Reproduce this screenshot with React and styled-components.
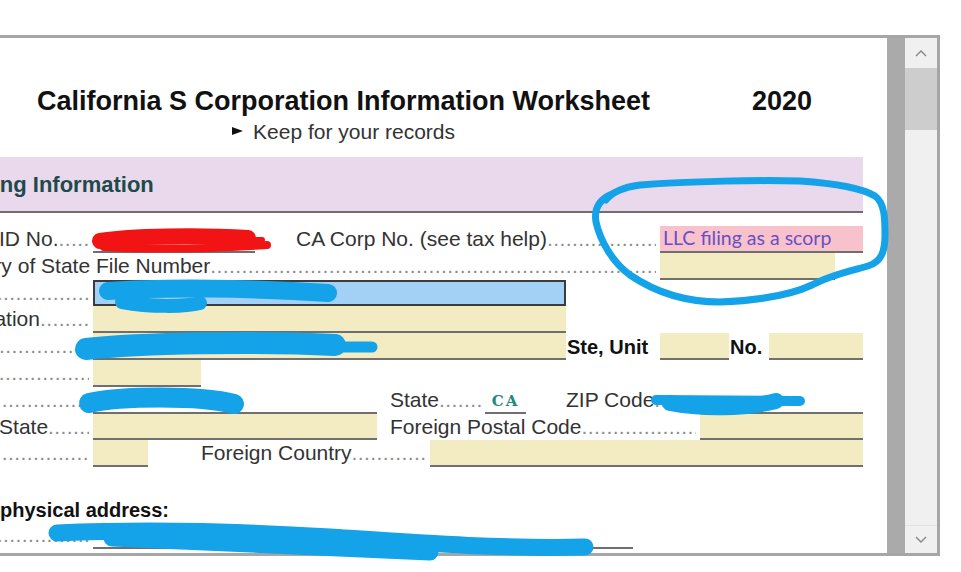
import React from "react";
import styled, { createGlobalStyle, css } from "styled-components";

const GlobalStyle = createGlobalStyle`
  html, body {
    margin: 0;
    padding: 0;
    background: #ffffff;
  }
  body {
    font-family: "Liberation Sans", Arial, sans-serif;
  }
`;

const DOTS = ".".repeat(180);

const tones = {
  plain: "#ffffff",
  beige: "#f3ebc2",
  pink: "#f8c2cc",
  focus: "#a3d1f6",
};

export default function App() {
  return (
    <Screen>
      <GlobalStyle />
      <Frame>
        <Viewport>
          <Sheet>
            <TitleRow>
              <TitleBlock>
                <Title>California S Corporation Information Worksheet</Title>
                <Subtitle>
                  <Pointer />
                  Keep for your records
                </Subtitle>
              </TitleBlock>
              <Year>2020</Year>
            </TitleRow>

            <Band>Filing Information</Band>

            <Rows>
              <Row>
                <Label $w={183} $pad={12}>
                  <span>Federal ID No.</span>
                  <Dots />
                </Label>
                <Field $w={162} $tone="plain" />
                <Spacer $w={41} />
                <Label $w={364}>
                  <span>CA Corp No. (see tax help)</span>
                  <Dots />
                </Label>
                <Field $w={203} $tone="pink">
                  <FieldText>LLC filing as a scorp</FieldText>
                </Field>
              </Row>

              <Row>
                <Label $w={750} $pad={12}>
                  <span>Secretary of State File Number</span>
                  <Dots />
                </Label>
                <Field $w={175} />
              </Row>

              <Row>
                <Label $w={183} $pad={12}>
                  <span>Name</span>
                  <Dots />
                </Label>
                <Field $w={473} $tone="focus" />
              </Row>

              <Row>
                <Label $w={183} $pad={12}>
                  <span>Continuation</span>
                  <Dots />
                </Label>
                <Field $w={473} />
              </Row>

              <Row>
                <Label $w={183} $pad={12}>
                  <span>Address</span>
                  <Dots />
                </Label>
                <Field $w={473} />
                <BoldLabel $w={94}>Ste, Unit</BoldLabel>
                <Field $w={69} />
                <BoldLabel $w={40}>No.</BoldLabel>
                <Field $w={94} />
              </Row>

              <Row>
                <Label $w={183} $pad={12}>
                  <span>PMB</span>
                  <Dots />
                </Label>
                <Field $w={108} />
              </Row>

              <Row>
                <Label $w={183} $pad={12}>
                  <span>City</span>
                  <Dots />
                </Label>
                <Field $w={284} $tone="plain" />
                <Spacer $w={13} />
                <Label $w={95}>
                  <span>State</span>
                  <Dots />
                </Label>
                <Field $w={41} $tone="plain">
                  <StateCode>CA</StateCode>
                </Field>
                <Spacer $w={40} />
                <Label $w={134}>
                  <span>ZIP Code</span>
                  <Dots />
                </Label>
                <Field $w={163} $tone="plain" />
              </Row>

              <Row>
                <Label $w={183} $pad={12}>
                  <span>Foreign State</span>
                  <Dots />
                </Label>
                <Field $w={284} />
                <Spacer $w={13} />
                <Label $w={310}>
                  <span>Foreign Postal Code</span>
                  <Dots />
                </Label>
                <Field $w={163} />
              </Row>

              <Row>
                <Label $w={183} $pad={12}>
                  <span>Country</span>
                  <Dots />
                </Label>
                <Field $w={55} />
                <Spacer $w={53} />
                <Label $w={229}>
                  <span>Foreign Country</span>
                  <Dots />
                </Label>
                <Field $w={433} />
              </Row>
            </Rows>

            <SubHeading>Principal physical address:</SubHeading>

            <Row>
              <Label $w={183} $pad={12}>
                <span>Street</span>
                <Dots />
              </Label>
              <Field $w={540} $tone="plain" />
            </Row>
          </Sheet>
        </Viewport>

        <Gutter />

        <Scrollbar>
          <ArrowButton>
            <svg width="12" height="8" viewBox="0 0 12 8">
              <path d="M1 7 L6 2 L11 7" fill="none" stroke="#858585" strokeWidth="1.4" />
            </svg>
          </ArrowButton>
          <Thumb />
          <Track />
          <ArrowButton $bottom>
            <svg width="12" height="8" viewBox="0 0 12 8">
              <path d="M1 1 L6 6 L11 1" fill="none" stroke="#858585" strokeWidth="1.4" />
            </svg>
          </ArrowButton>
        </Scrollbar>
      </Frame>

      {/* hand drawn redaction marks over the screenshot */}
      <Marks viewBox="0 0 961 572">
        <g stroke="#f21414" fill="none" strokeLinecap="round">
          <path d="M100 241 C 130 236, 200 235, 248 238" strokeWidth="16" />
          <path d="M104 247 C 160 250, 220 248, 267 245" strokeWidth="8" />
          <path d="M170 239 L 262 240" strokeWidth="6" />
        </g>
        <g stroke="#14a2e8" fill="none" strokeLinecap="round" strokeLinejoin="round">
          <path
            d="M606 200 C 612 192, 625 187, 640 185 C 690 181, 760 180, 800 181 C 830 183, 860 187, 875 196 C 885 203, 885 220, 885 235 C 885 250, 882 262, 868 266 C 850 271, 830 275, 812 285 C 795 293, 770 300, 720 302 C 685 302, 655 292, 630 275 C 612 262, 600 240, 596 222 C 594 210, 598 200, 612 194"
            strokeWidth="7"
          />
          <path d="M108 291 C 160 287, 260 288, 328 293" strokeWidth="18" />
          <path d="M122 302 C 150 307, 185 307, 200 303" strokeWidth="14" />
          <path d="M86 349 C 140 343, 260 341, 335 345" strokeWidth="22" />
          <path d="M330 347 L 372 347" strokeWidth="11" />
          <path d="M89 403 C 120 396, 200 395, 234 404" strokeWidth="20" />
          <path d="M656 400 L 800 401" strokeWidth="10" />
          <path d="M670 403 C 700 409, 745 409, 776 401" strokeWidth="16" />
          <path d="M57 533 C 150 529, 250 532, 330 537 C 420 543, 500 549, 585 547" strokeWidth="17" />
          <path d="M112 538 C 200 541, 300 546, 430 552" strokeWidth="17" />
        </g>
      </Marks>
    </Screen>
  );
}

const Screen = styled.div`
  position: relative;
  width: 961px;
  height: 572px;
  overflow: hidden;
  background: #ffffff;
  padding-top: 35px;
  box-sizing: border-box;
`;

const Frame = styled.div`
  display: flex;
  width: 940px;
  height: 521px;
  box-sizing: border-box;
  border: 3px solid #a6a6a6;
  border-left: 0;
`;

const Viewport = styled.div`
  flex: 0 0 887px;
  overflow: hidden;
  background: #ffffff;
`;

const Sheet = styled.div`
  width: 953px;
  margin-left: -90px;
  padding-top: 48px;
`;

const TitleRow = styled.div`
  display: flex;
  align-items: flex-start;
  padding: 0 51px 0 127px;
`;

const TitleBlock = styled.div`
  display: flex;
  flex-direction: column;
  align-items: center;
`;

const Title = styled.h1`
  margin: 0;
  font-size: 27px;
  line-height: 31px;
  font-weight: 700;
  color: #111111;
  white-space: nowrap;
`;

const Subtitle = styled.div`
  display: flex;
  align-items: center;
  margin-top: 3px;
  font-size: 21px;
  line-height: 24px;
  color: #333333;
`;

const Pointer = styled.span`
  width: 0;
  height: 0;
  margin: 0 10px 2px 0;
  border-left: 11px solid #111111;
  border-top: 4.5px solid transparent;
  border-bottom: 4.5px solid transparent;
`;

const Year = styled.div`
  margin-left: auto;
  font-size: 27px;
  line-height: 31px;
  font-weight: 700;
  color: #111111;
`;

const Band = styled.h2`
  margin: 13px 0 0;
  height: 56px;
  box-sizing: border-box;
  padding: 2px 0 0 58px;
  background: #ead8ec;
  border-bottom: 2px solid #6e6e6e;
  font-size: 22px;
  line-height: 52px;
  font-weight: 700;
  color: #1d4a4a;
  white-space: nowrap;
`;

const Rows = styled.div`
  margin-top: 13px;
`;

const Row = styled.div`
  display: flex;
  height: 26.8px;
`;

const Label = styled.div`
  flex: 0 0 ${(p) => p.$w}px;
  display: flex;
  box-sizing: border-box;
  padding: 0 4px 0 ${(p) => p.$pad || 0}px;
  overflow: hidden;
  white-space: nowrap;
  font-size: 21px;
  line-height: 26.8px;
  color: #333333;
`;

const Dots = styled.span`
  flex: 1;
  overflow: hidden;
  color: #8c8c8c;
  letter-spacing: 0.4px;
  &::after {
    content: "${DOTS}";
  }
`;

const BoldLabel = styled.div`
  flex: 0 0 ${(p) => p.$w}px;
  box-sizing: border-box;
  padding: 2px 0 0 1px;
  font-size: 20px;
  line-height: 24.8px;
  font-weight: 700;
  color: #111111;
  white-space: nowrap;
`;

const Spacer = styled.div`
  flex: 0 0 ${(p) => p.$w}px;
`;

const Field = styled.div`
  flex: 0 0 ${(p) => p.$w}px;
  box-sizing: border-box;
  background: ${(p) => tones[p.$tone || "beige"]};
  border-bottom: 2px solid #6f6f6f;
  overflow: hidden;
  ${(p) =>
    p.$tone === "focus" &&
    css`
      border: 2px solid #3b3b3b;
    `}
`;

const FieldText = styled.div`
  padding: 1px 0 0 3px;
  font-family: Lato, "Open Sans", sans-serif;
  font-size: 19.5px;
  line-height: 22px;
  color: #6a4fc3;
  white-space: nowrap;
`;

const StateCode = styled.div`
  padding-top: 5px;
  text-align: center;
  font-family: "DejaVu Serif", "Liberation Serif", serif;
  font-size: 15px;
  line-height: 18px;
  font-weight: 700;
  letter-spacing: 2px;
  color: #23897c;
`;

const SubHeading = styled.div`
  margin-top: 31px;
  font-size: 20px;
  line-height: 24px;
  font-weight: 700;
  color: #111111;
  white-space: nowrap;
`;

const Gutter = styled.div`
  flex: 0 0 18px;
  background: #aaaaaa;
`;

const Scrollbar = styled.div`
  flex: 0 0 32px;
  display: flex;
  flex-direction: column;
  background: #f0f0f0;
`;

const ArrowButton = styled.div`
  flex: 0 0 ${(p) => (p.$bottom ? 28 : 30)}px;
  display: flex;
  align-items: center;
  justify-content: center;
  background: #f0f0f0;
  ${(p) =>
    p.$bottom &&
    css`
      border-top: 1px solid #e2e2e2;
      box-sizing: border-box;
    `}
`;

const Thumb = styled.div`
  flex: 0 0 62px;
  background: #cdcdcd;
`;

const Track = styled.div`
  flex: 1;
`;

const Marks = styled.svg`
  position: absolute;
  top: 0;
  left: 0;
  width: 961px;
  height: 572px;
  pointer-events: none;
`;
